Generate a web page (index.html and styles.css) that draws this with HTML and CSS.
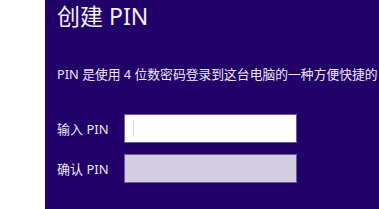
FILE: index.html
```html
<!DOCTYPE html>
<html lang="zh-CN">
<head>
    <meta charset="UTF-8">
    <meta name="viewport" content="width=device-width, initial-scale=1.0">
    <title>创建 PIN</title>
    <link rel="stylesheet" href="styles.css">
</head>
<body>
    <div class="page">
        <div class="side"></div>
        <div class="panel">
            <h1>创建 PIN</h1>
            <p class="desc">PIN 是使用 4 位数密码登录到这台电脑的一种方便快捷的</p>

            <div class="field">
                <label for="pin">输入 PIN</label>
                <div class="box">
                    <span class="caret"></span>
                </div>
            </div>
            <div class="field">
                <label for="pin2">确认 PIN</label>
                <div class="box disabled"></div>
            </div>
        </div>
    </div>
</body>
</html>
```

FILE: styles.css
```css
:root {
    --panel-color: #220069;
    --text-color: #ece9f4;
}

* {
    margin: 0;
    padding: 0;
    box-sizing: border-box;
    font-family: 'Noto Sans', 'Noto Sans CJK SC', sans-serif;
}

body {
    background-color: white;
    width: 379px;
    height: 209px;
    overflow: hidden;
}

.page {
    display: flex;
    height: 209px;
}

.side {
    width: 45px;
    flex-shrink: 0;
    background-color: white;
}

.panel {
    flex: 1;
    min-width: 0;
    background-color: var(--panel-color);
    color: var(--text-color);
    padding: 1px 0 0 12px;
    overflow: hidden;
}

h1 {
    font-size: 23px;
    font-weight: 400;
    line-height: 30px;
    color: #f4f2f8;
}

.desc {
    margin-top: 33px;
    font-size: 12.8px;
    line-height: 20px;
    white-space: nowrap;
}

.field {
    display: flex;
    align-items: center;
}

.desc + .field {
    margin-top: 30px;
}

.field + .field {
    margin-top: 11px;
}

label {
    width: 67px;
    flex-shrink: 0;
    font-size: 13px;
}

.box {
    width: 173px;
    height: 29px;
    background-color: white;
    border: 1px solid #6b5aa0;
    display: flex;
    align-items: center;
    padding-left: 8px;
}

.box.disabled {
    background-color: #d3cde2;
}

.caret {
    width: 1px;
    height: 17px;
    background-color: #dcdcdc;
}
```
